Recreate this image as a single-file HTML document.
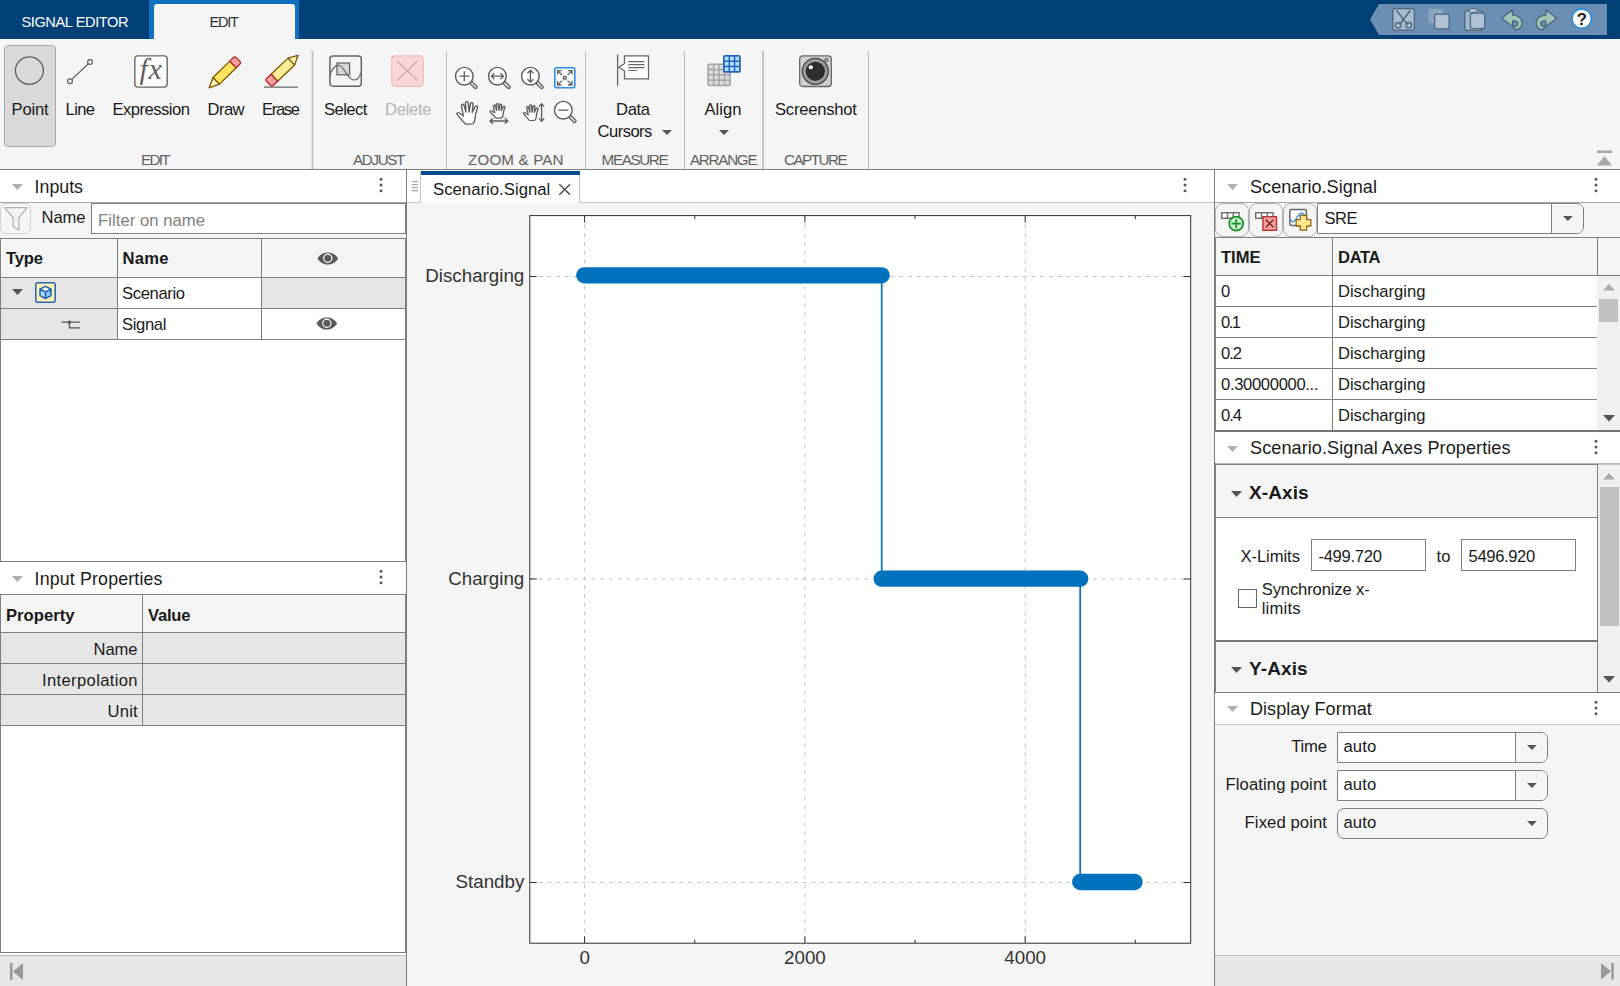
<!DOCTYPE html>
<html lang="en"><head><meta charset="utf-8"><title>Signal Editor</title>
<style>
html,body{margin:0;padding:0;}
body{width:1620px;height:986px;position:relative;overflow:hidden;background:#f5f5f5;font-family:"Liberation Sans",sans-serif;}
.a{position:absolute;box-sizing:border-box;display:block;}
.t{position:absolute;white-space:nowrap;display:block;}
svg{overflow:visible;}
</style></head><body>
<div class="a " style="left:0px;top:0px;width:1620px;height:39px;background:#004076;"></div>
<div class="a " style="left:149px;top:0px;width:150px;height:39px;background:#1171be;"></div>
<div class="a " style="left:154px;top:4px;width:141px;height:35px;background:#f5f5f5;border-radius:3px 3px 0 0;"></div>
<span class="t" style="top:12px;font-size:14.6px;line-height:20px;color:#ffffff;left:21.40px;letter-spacing:-0.397px;">SIGNAL EDITOR</span>
<span class="t" style="top:12px;font-size:14.6px;line-height:20px;color:#333333;left:209.40px;letter-spacing:-1.219px;">EDIT</span>
<svg class="a" style="left:1370px;top:4px;" width="237" height="31" viewBox="0 0 237 31"><path d="M0 15.5 L9 0 H237 V31 H9 Z" fill="#6a8fb2"/></svg>
<div class="a " style="left:0px;top:39px;width:1620px;height:130px;background:#f5f5f5;"></div>
<div class="a " style="left:0px;top:169px;width:1620px;height:1px;background:#808080;"></div>
<svg class="a" style="left:0px;top:0px;" width="1" height="1" viewBox="0 0 1 1"><rect x="311.6" y="51" width="1.7" height="118" fill="#bcbcbc"/><rect x="446" y="51" width="1" height="118" fill="#bcbcbc"/><rect x="585" y="51" width="1" height="118" fill="#bcbcbc"/><rect x="684" y="51" width="1" height="118" fill="#bcbcbc"/><rect x="762.3" y="51" width="1.7" height="118" fill="#bcbcbc"/><rect x="868" y="51" width="1" height="118" fill="#bcbcbc"/></svg>
<div class="a " style="left:4px;top:45px;width:52px;height:102px;background:#d9d9d9;border:1px solid #a9a9a9;border-radius:4px;"></div>
<span class="t" style="top:98px;font-size:16.6px;line-height:23px;color:#1a1a1a;left:11.60px;letter-spacing:-0.209px;">Point</span>
<span class="t" style="top:98px;font-size:16.6px;line-height:23px;color:#1a1a1a;left:65.60px;letter-spacing:-0.662px;">Line</span>
<span class="t" style="top:98px;font-size:16.6px;line-height:23px;color:#1a1a1a;left:112.40px;letter-spacing:-0.502px;">Expression</span>
<span class="t" style="top:98px;font-size:16.6px;line-height:23px;color:#1a1a1a;left:207.60px;letter-spacing:-0.579px;">Draw</span>
<span class="t" style="top:98px;font-size:16.6px;line-height:23px;color:#1a1a1a;left:262.00px;letter-spacing:-1.341px;">Erase</span>
<span class="t" style="top:98px;font-size:16.6px;line-height:23px;color:#1a1a1a;left:324.00px;letter-spacing:-0.547px;">Select</span>
<span class="t" style="top:98px;font-size:16.6px;line-height:23px;color:#b4b4b4;left:385.00px;letter-spacing:-0.277px;">Delete</span>
<span class="t" style="top:98px;font-size:16.6px;line-height:23px;color:#1a1a1a;left:616.00px;letter-spacing:-0.355px;">Data</span>
<span class="t" style="top:120px;font-size:16.6px;line-height:23px;color:#1a1a1a;left:597.60px;letter-spacing:-0.551px;">Cursors</span>
<span class="t" style="top:98px;font-size:16.6px;line-height:23px;color:#1a1a1a;left:704.40px;letter-spacing:0.072px;">Align</span>
<span class="t" style="top:98px;font-size:16.6px;line-height:23px;color:#1a1a1a;left:775.00px;letter-spacing:-0.219px;">Screenshot</span>
<span class="t" style="top:149px;font-size:15.2px;line-height:21px;color:#616161;left:141.00px;letter-spacing:-1.674px;">EDIT</span>
<span class="t" style="top:149px;font-size:15.2px;line-height:21px;color:#616161;left:353.00px;letter-spacing:-1.343px;">ADJUST</span>
<span class="t" style="top:149px;font-size:15.2px;line-height:21px;color:#616161;left:468.00px;letter-spacing:0.144px;">ZOOM &amp; PAN</span>
<span class="t" style="top:149px;font-size:15.2px;line-height:21px;color:#616161;left:601.60px;letter-spacing:-1.362px;">MEASURE</span>
<span class="t" style="top:149px;font-size:15.2px;line-height:21px;color:#616161;left:690.00px;letter-spacing:-1.262px;">ARRANGE</span>
<span class="t" style="top:149px;font-size:15.2px;line-height:21px;color:#616161;left:784.00px;letter-spacing:-1.505px;">CAPTURE</span>
<svg class="a" style="left:662px;top:130px;" width="10" height="5" viewBox="0 0 10 5"><path d="M0 0H10L5 5Z" fill="#555"/></svg>
<svg class="a" style="left:719.4px;top:130px;" width="10" height="5" viewBox="0 0 10 5"><path d="M0 0H10L5 5Z" fill="#555"/></svg>
<svg class="a" style="left:1597px;top:150px;" width="15" height="16" viewBox="0 0 15 16"><rect x="0" y="0.5" width="15" height="2.5" fill="#a6a6a6"/><path d="M0 15.5H15L7.5 6Z" fill="#a6a6a6"/></svg>
<div class="a " style="left:0px;top:170px;width:406px;height:32px;background:#ffffff;"></div>
<div class="a " style="left:0px;top:202px;width:406px;height:1.4px;background:#a8a8a8;"></div>
<svg class="a" style="left:12px;top:184.4px;" width="11" height="6" viewBox="0 0 11 6"><path d="M0 0H11L5.5 6Z" fill="#b0b0b0"/></svg>
<span class="t" style="top:175px;font-size:17.8px;line-height:25px;color:#1a1a1a;left:34.60px;letter-spacing:-0.018px;">Inputs</span>
<svg class="a" style="left:379.4px;top:177.4px;" width="4" height="16" viewBox="0 0 4 16"><circle cx="2" cy="2.3" r="1.5" fill="#5c5c5c"/><circle cx="2" cy="8" r="1.5" fill="#5c5c5c"/><circle cx="2" cy="13.7" r="1.5" fill="#5c5c5c"/></svg>
<div class="a " style="left:406px;top:170px;width:1px;height:816px;background:#7d7d7d;"></div>
<div class="a " style="left:0px;top:203px;width:406px;height:32px;background:#f5f5f5;"></div>
<div class="a " style="left:0px;top:235px;width:406px;height:3px;background:#f5f5f5;"></div>
<div class="a " style="left:0px;top:203px;width:31px;height:31px;background:#f5f5f5;border:1px solid #d2d2d2;border-radius:6px;"></div>
<svg class="a" style="left:4px;top:207px;" width="24" height="24" viewBox="0 0 24 24"><path d="M0.7 0.7H23L14.8 11V23L9.2 19.6V11Z" fill="none" stroke="#b4b4b4" stroke-width="1.3" stroke-linejoin="round"/></svg>
<span class="t" style="top:206px;font-size:16.6px;line-height:23px;color:#1a1a1a;left:41.60px;letter-spacing:-0.160px;">Name</span>
<div class="a " style="left:91px;top:203px;width:315px;height:31px;background:#ffffff;border:1px solid #7f7f7f;"></div>
<span class="t" style="top:209px;font-size:16.6px;line-height:23px;color:#808080;left:98.00px;letter-spacing:0.069px;">Filter on name</span>
<div class="a " style="left:0px;top:238px;width:406px;height:324px;background:#ffffff;border:1px solid #7f7f7f;"></div>
<div class="a " style="left:1px;top:239px;width:404px;height:38px;background:#f5f5f5;"></div>
<div class="a " style="left:1px;top:277px;width:404px;height:1px;background:#7f7f7f;"></div>
<div class="a " style="left:1px;top:308px;width:404px;height:1px;background:#7f7f7f;"></div>
<div class="a " style="left:1px;top:339px;width:404px;height:1px;background:#7f7f7f;"></div>
<div class="a " style="left:1px;top:278px;width:116px;height:30px;background:#e6e6e6;"></div>
<div class="a " style="left:262px;top:278px;width:143px;height:30px;background:#e6e6e6;"></div>
<div class="a " style="left:1px;top:309px;width:116px;height:30px;background:#e6e6e6;"></div>
<div class="a " style="left:117px;top:239px;width:1px;height:101px;background:#7f7f7f;"></div>
<div class="a " style="left:261px;top:239px;width:1px;height:101px;background:#7f7f7f;"></div>
<span class="t" style="top:247px;font-size:16.6px;line-height:23px;color:#1a1a1a;left:6.00px;letter-spacing:-0.171px;font-weight:bold;">Type</span>
<span class="t" style="top:247px;font-size:16.6px;line-height:23px;color:#1a1a1a;left:122.40px;letter-spacing:0.329px;font-weight:bold;">Name</span>
<span class="t" style="top:282px;font-size:16.6px;line-height:23px;color:#1a1a1a;left:122.00px;letter-spacing:-0.360px;">Scenario</span>
<span class="t" style="top:313px;font-size:16.6px;line-height:23px;color:#1a1a1a;left:122.00px;letter-spacing:-0.349px;">Signal</span>
<svg class="a" style="left:316.6px;top:251.8px;" width="22" height="13" viewBox="0 0 22 13"><path d="M0.5 6.5C3 2.2 6.8 0.5 10.8 0.5C14.8 0.5 18.6 2.2 21.1 6.5C18.6 10.8 14.8 12.5 10.8 12.5C6.8 12.5 3 10.8 0.5 6.5Z" fill="#595959"/><circle cx="10.8" cy="6.3" r="4.7" fill="#fff"/><circle cx="10.8" cy="6.3" r="3.5" fill="#595959"/></svg>
<svg class="a" style="left:316.3px;top:316.9px;" width="22" height="13" viewBox="0 0 22 13"><path d="M0.5 6.5C3 2.2 6.8 0.5 10.8 0.5C14.8 0.5 18.6 2.2 21.1 6.5C18.6 10.8 14.8 12.5 10.8 12.5C6.8 12.5 3 10.8 0.5 6.5Z" fill="#595959"/><circle cx="10.8" cy="6.3" r="4.7" fill="#fff"/><circle cx="10.8" cy="6.3" r="3.5" fill="#595959"/></svg>
<svg class="a" style="left:12.4px;top:289.4px;" width="11" height="6" viewBox="0 0 11 6"><path d="M0 0H11L5.5 6Z" fill="#555"/></svg>
<svg class="a" style="left:35px;top:282.4px;" width="21" height="21" viewBox="0 0 21 21"><rect x="0.75" y="0.75" width="19.5" height="19.5" rx="2.2" fill="#fdf1b4" stroke="#2566b8" stroke-width="1.5"/><path d="M10.5 4.3L16 7.1L10.5 10L5 7.1Z" fill="#fff"/><path d="M5 7.1L10.5 10V16.6L5 13.6Z" fill="#a9d9ff"/><path d="M16 7.1L10.5 10V16.6L16 13.6Z" fill="#8ccbff"/><path d="M10.5 4.3L16 7.1V13.6L10.5 16.6L5 13.6V7.1ZM5 7.1L10.5 10L16 7.1M10.5 10V16.6" fill="none" stroke="#1d5fb8" stroke-width="1.5" stroke-linejoin="round"/></svg>
<svg class="a" style="left:61px;top:319px;" width="20" height="11" viewBox="0 0 20 11"><path d="M0.5 3.2H19M8.4 3.2V8.8H19" fill="none" stroke="#555" stroke-width="1.3"/><circle cx="8.4" cy="3.2" r="1.7" fill="#555"/></svg>
<div class="a " style="left:0px;top:562px;width:406px;height:32px;background:#ffffff;"></div>
<svg class="a" style="left:12px;top:576.4px;" width="11" height="6" viewBox="0 0 11 6"><path d="M0 0H11L5.5 6Z" fill="#b0b0b0"/></svg>
<span class="t" style="top:567px;font-size:17.8px;line-height:25px;color:#1a1a1a;left:34.60px;letter-spacing:0.156px;">Input Properties</span>
<svg class="a" style="left:379.4px;top:569.4px;" width="4" height="16" viewBox="0 0 4 16"><circle cx="2" cy="2.3" r="1.5" fill="#5c5c5c"/><circle cx="2" cy="8" r="1.5" fill="#5c5c5c"/><circle cx="2" cy="13.7" r="1.5" fill="#5c5c5c"/></svg>
<div class="a " style="left:0px;top:594px;width:406px;height:359px;background:#ffffff;border:1px solid #7f7f7f;"></div>
<div class="a " style="left:1px;top:595px;width:404px;height:37px;background:#f5f5f5;"></div>
<div class="a " style="left:1px;top:633px;width:404px;height:92px;background:#e6e6e6;"></div>
<div class="a " style="left:1px;top:632px;width:404px;height:1px;background:#7f7f7f;"></div>
<div class="a " style="left:1px;top:663px;width:404px;height:1px;background:#7f7f7f;"></div>
<div class="a " style="left:1px;top:694px;width:404px;height:1px;background:#7f7f7f;"></div>
<div class="a " style="left:1px;top:725px;width:404px;height:1px;background:#7f7f7f;"></div>
<div class="a " style="left:142px;top:595px;width:1px;height:131px;background:#7f7f7f;"></div>
<span class="t" style="top:604px;font-size:16.6px;line-height:23px;color:#1a1a1a;left:6.00px;letter-spacing:0.048px;font-weight:bold;">Property</span>
<span class="t" style="top:604px;font-size:16.6px;line-height:23px;color:#1a1a1a;left:148.00px;letter-spacing:-0.243px;font-weight:bold;">Value</span>
<span class="t" style="top:638px;font-size:16.6px;line-height:23px;color:#1a1a1a;left:93.60px;letter-spacing:-0.094px;">Name</span>
<span class="t" style="top:669px;font-size:16.6px;line-height:23px;color:#1a1a1a;left:42.00px;letter-spacing:0.353px;">Interpolation</span>
<span class="t" style="top:700px;font-size:16.6px;line-height:23px;color:#1a1a1a;left:107.60px;letter-spacing:0.160px;">Unit</span>
<div class="a " style="left:0px;top:953px;width:406px;height:2px;background:#ffffff;"></div>
<div class="a " style="left:0px;top:955px;width:406px;height:1px;background:#c0c0c0;"></div>
<div class="a " style="left:0px;top:956px;width:406px;height:30px;background:#e6e6e6;"></div>
<svg class="a" style="left:10px;top:963px;" width="13" height="17" viewBox="0 0 13 17"><rect x="0" y="0" width="2.5" height="17" fill="#999"/><path d="M13 0V17L3 8.5Z" fill="#999"/></svg>
<div class="a " style="left:407px;top:170px;width:807px;height:32px;background:#ffffff;"></div>
<div class="a " style="left:407px;top:202px;width:807px;height:1px;background:#c8c8c8;"></div>
<svg class="a" style="left:412px;top:181px;" width="6" height="10" viewBox="0 0 6 10"><path d="M0 0.5H6M0 3.5H6M0 6.5H6M0 9.5H6" stroke="#a4a4a4" stroke-width="1.25"/></svg>
<div class="a " style="left:420px;top:171px;width:160px;height:32px;background:#ffffff;border-left:1px solid #c8c8c8;border-right:1px solid #c8c8c8;"></div>
<div class="a " style="left:421px;top:171px;width:158.5px;height:4px;background:#004b8d;"></div>
<span class="t" style="top:178px;font-size:16.76px;line-height:23px;color:#1a1a1a;left:433.00px;">Scenario.Signal</span>
<svg class="a" style="left:559px;top:183.6px;" width="11.4" height="11" viewBox="0 0 11.4 11"><path d="M0.3 0.3L11.1 10.7M11.1 0.3L0.3 10.7" stroke="#444" stroke-width="1.3"/></svg>
<svg class="a" style="left:1183.4px;top:177.4px;" width="4" height="16" viewBox="0 0 4 16"><circle cx="2" cy="2.3" r="1.5" fill="#5c5c5c"/><circle cx="2" cy="8" r="1.5" fill="#5c5c5c"/><circle cx="2" cy="13.7" r="1.5" fill="#5c5c5c"/></svg>
<div class="a " style="left:407px;top:203px;width:807px;height:783px;background:#f5f5f5;"></div>
<svg class="a" style="left:0px;top:0px;" width="1620" height="986" viewBox="0 0 1620 986"><rect x="529.8" y="215.6" width="660.9000000000001" height="727.6" fill="#fff"/><line x1="584.6" y1="215.6" x2="584.6" y2="943.2" stroke="#c2c2c2" stroke-width="1" stroke-dasharray="3.8 5"/><line x1="804.9" y1="215.6" x2="804.9" y2="943.2" stroke="#c2c2c2" stroke-width="1" stroke-dasharray="3.8 5"/><line x1="1025.2" y1="215.6" x2="1025.2" y2="943.2" stroke="#c2c2c2" stroke-width="1" stroke-dasharray="3.8 5"/><line x1="529.8" y1="276.5" x2="1190.7" y2="276.5" stroke="#c2c2c2" stroke-width="1" stroke-dasharray="3.8 5"/><line x1="529.8" y1="579" x2="1190.7" y2="579" stroke="#c2c2c2" stroke-width="1" stroke-dasharray="3.8 5"/><line x1="529.8" y1="882.5" x2="1190.7" y2="882.5" stroke="#c2c2c2" stroke-width="1" stroke-dasharray="3.8 5"/><polyline fill="none" stroke="#0072bd" stroke-width="1.7" points="584.3,276.5 881.7,276.5 881.7,579 1080.2,579 1080.2,882.5 1134.5,882.5"/><line x1="584.3" y1="275.3" x2="881.7" y2="275.3" stroke="#0072bd" stroke-width="16.3" stroke-linecap="round"/><line x1="881.7" y1="578.7" x2="1080.2" y2="578.7" stroke="#0072bd" stroke-width="16.3" stroke-linecap="round"/><line x1="1080.2" y1="882.0" x2="1134.5" y2="882.0" stroke="#0072bd" stroke-width="16.3" stroke-linecap="round"/><rect x="529.8" y="215.6" width="660.9000000000001" height="727.6" fill="none" stroke="#303030" stroke-width="1"/><path d="M584.6 215.6v7M584.6 943.2v-7" stroke="#303030" stroke-width="1"/><path d="M804.9 215.6v7M804.9 943.2v-7" stroke="#303030" stroke-width="1"/><path d="M1025.2 215.6v7M1025.2 943.2v-7" stroke="#303030" stroke-width="1"/><path d="M694.8 215.6v3.5M694.8 943.2v-3.5" stroke="#303030" stroke-width="1"/><path d="M915.0 215.6v3.5M915.0 943.2v-3.5" stroke="#303030" stroke-width="1"/><path d="M1135.3 215.6v3.5M1135.3 943.2v-3.5" stroke="#303030" stroke-width="1"/><path d="M529.8 276.5h7M1190.7 276.5h-7" stroke="#303030" stroke-width="1"/><path d="M529.8 579h7M1190.7 579h-7" stroke="#303030" stroke-width="1"/><path d="M529.8 882.5h7M1190.7 882.5h-7" stroke="#303030" stroke-width="1"/><text x="524.3" y="282.0" text-anchor="end" font-family="Liberation Sans, sans-serif" font-size="18.75" fill="#333333">Discharging</text><text x="524.3" y="585.0" text-anchor="end" font-family="Liberation Sans, sans-serif" font-size="18.75" fill="#333333">Charging</text><text x="524.3" y="888.0" text-anchor="end" font-family="Liberation Sans, sans-serif" font-size="18.75" fill="#333333">Standby</text><text x="584.6" y="964" text-anchor="middle" font-family="Liberation Sans, sans-serif" font-size="18.75" fill="#333333">0</text><text x="804.9" y="964" text-anchor="middle" font-family="Liberation Sans, sans-serif" font-size="18.75" fill="#333333">2000</text><text x="1025.2" y="964" text-anchor="middle" font-family="Liberation Sans, sans-serif" font-size="18.75" fill="#333333">4000</text></svg>
<div class="a " style="left:1214px;top:170px;width:1px;height:816px;background:#7d7d7d;"></div>
<div class="a " style="left:1215px;top:170px;width:405px;height:32px;background:#ffffff;"></div>
<div class="a " style="left:1215px;top:202px;width:405px;height:1.4px;background:#a8a8a8;"></div>
<svg class="a" style="left:1227.4px;top:184.4px;" width="11" height="6" viewBox="0 0 11 6"><path d="M0 0H11L5.5 6Z" fill="#b0b0b0"/></svg>
<span class="t" style="top:175px;font-size:18.1px;line-height:25px;color:#1a1a1a;left:1250.00px;letter-spacing:0.016px;">Scenario.Signal</span>
<svg class="a" style="left:1594.2px;top:177.4px;" width="4" height="16" viewBox="0 0 4 16"><circle cx="2" cy="2.3" r="1.5" fill="#5c5c5c"/><circle cx="2" cy="8" r="1.5" fill="#5c5c5c"/><circle cx="2" cy="13.7" r="1.5" fill="#5c5c5c"/></svg>
<div class="a " style="left:1215px;top:203px;width:405px;height:34px;background:#f5f5f5;"></div>
<div class="a " style="left:1215px;top:203px;width:34px;height:34px;background:#f5f5f5;border:1px solid #b4b4b4;border-radius:8px;"></div>
<div class="a " style="left:1249px;top:203px;width:34px;height:34px;background:#f5f5f5;border:1px solid #b4b4b4;border-radius:8px;"></div>
<div class="a " style="left:1283px;top:203px;width:34px;height:34px;background:#f5f5f5;border:1px solid #b4b4b4;border-radius:8px;"></div>
<svg class="a" style="left:1221px;top:212px;" width="26" height="20" viewBox="0 0 26 20"><rect x="0.7" y="0.7" width="17.4" height="5.6" fill="#fff" stroke="#6e6e6e" stroke-width="1.4"/><path d="M6.5 0.7V6.3M12.3 0.7V6.3" stroke="#6e6e6e" stroke-width="1.4"/><circle cx="15.2" cy="11.6" r="7" fill="#cdf2cd" stroke="#15912a" stroke-width="1.7"/><path d="M15.2 7V16.2M10.6 11.6H19.8" stroke="#15912a" stroke-width="1.7"/></svg>
<svg class="a" style="left:1255px;top:212px;" width="26" height="20" viewBox="0 0 26 20"><rect x="0.7" y="0.7" width="17.4" height="5.6" fill="#fff" stroke="#6e6e6e" stroke-width="1.4"/><path d="M6.5 0.7V6.3M12.3 0.7V6.3" stroke="#6e6e6e" stroke-width="1.4"/><rect x="7.9" y="4.7" width="13.6" height="13.6" fill="#f99f9f" stroke="#b03434" stroke-width="1.4"/><path d="M10.9 7.7L18.5 15.3M18.5 7.7L10.9 15.3" stroke="#6e1c1c" stroke-width="1.3"/></svg>
<svg class="a" style="left:1289px;top:209px;" width="24" height="24" viewBox="0 0 24 24"><rect x="0.8" y="0.6" width="16.6" height="16" rx="2" fill="#fff" stroke="#666" stroke-width="1.5"/><path d="M1.2 10.1C2 12 3.2 13 4.4 12.6C7.5 11.5 8.8 4.5 12.6 4.2C14.8 4.2 16 6 16.8 8.5" fill="none" stroke="#3d94e6" stroke-width="1.4"/><path d="M11.3 6.4H17.7V10.6H21.9V17H17.7V21.2H11.3V17H7.1V10.6H11.3Z" fill="#ffe68c" stroke="#8a6a12" stroke-width="1.3" stroke-linejoin="round"/></svg>
<div class="a " style="left:1316.5px;top:203px;width:267.5px;height:31px;background:#ffffff;border:1px solid #7f7f7f;border-radius:0 7px 7px 0;"></div>
<div class="a " style="left:1551px;top:204px;width:32.0px;height:29px;background:#f5f5f5;border-left:1px solid #7f7f7f;border-radius:0 6px 6px 0;"></div>
<svg class="a" style="left:1562.6px;top:216.2px;" width="9.8" height="5" viewBox="0 0 9.8 5"><path d="M0 0H9.8L4.9 5Z" fill="#555"/></svg>
<span class="t" style="top:207px;font-size:16.5px;line-height:23px;color:#1a1a1a;left:1324.40px;letter-spacing:-0.363px;">SRE</span>
<div class="a " style="left:1215px;top:237px;width:405px;height:1px;background:#7f7f7f;"></div>
<div class="a " style="left:1215px;top:238px;width:405px;height:37px;background:#f5f5f5;"></div>
<div class="a " style="left:1216px;top:276px;width:381px;height:154px;background:#ffffff;"></div>
<div class="a " style="left:1215px;top:275px;width:405px;height:1px;background:#7f7f7f;"></div>
<div class="a " style="left:1215px;top:306px;width:382px;height:1px;background:#7f7f7f;"></div>
<div class="a " style="left:1215px;top:337px;width:382px;height:1px;background:#7f7f7f;"></div>
<div class="a " style="left:1215px;top:368px;width:382px;height:1px;background:#7f7f7f;"></div>
<div class="a " style="left:1215px;top:399px;width:382px;height:1px;background:#7f7f7f;"></div>
<div class="a " style="left:1215px;top:430px;width:405px;height:2px;background:#757575;"></div>
<div class="a " style="left:1215px;top:237px;width:1px;height:228px;background:#7f7f7f;"></div>
<div class="a " style="left:1332px;top:238px;width:1px;height:192px;background:#7f7f7f;"></div>
<div class="a " style="left:1597px;top:238px;width:1px;height:38px;background:#7f7f7f;"></div>
<div class="a " style="left:1597px;top:276px;width:23px;height:154px;background:#f0f0f0;"></div>
<span class="t" style="top:246px;font-size:16.6px;line-height:23px;color:#1a1a1a;left:1221.00px;letter-spacing:-0.017px;font-weight:bold;">TIME</span>
<span class="t" style="top:246px;font-size:16.6px;line-height:23px;color:#1a1a1a;left:1338.00px;letter-spacing:-0.347px;font-weight:bold;">DATA</span>
<span class="t" style="top:280px;font-size:16.6px;line-height:23px;color:#1a1a1a;left:1221.00px;">0</span>
<span class="t" style="top:280px;font-size:16.6px;line-height:23px;color:#1a1a1a;left:1338.00px;letter-spacing:-0.025px;">Discharging</span>
<span class="t" style="top:311px;font-size:16.6px;line-height:23px;color:#1a1a1a;left:1221.00px;letter-spacing:-1.538px;">0.1</span>
<span class="t" style="top:311px;font-size:16.6px;line-height:23px;color:#1a1a1a;left:1338.00px;letter-spacing:-0.025px;">Discharging</span>
<span class="t" style="top:342px;font-size:16.6px;line-height:23px;color:#1a1a1a;left:1221.00px;letter-spacing:-1.038px;">0.2</span>
<span class="t" style="top:342px;font-size:16.6px;line-height:23px;color:#1a1a1a;left:1338.00px;letter-spacing:-0.025px;">Discharging</span>
<span class="t" style="top:373px;font-size:16.6px;line-height:23px;color:#1a1a1a;left:1221.00px;letter-spacing:-0.336px;">0.30000000...</span>
<span class="t" style="top:373px;font-size:16.6px;line-height:23px;color:#1a1a1a;left:1338.00px;letter-spacing:-0.025px;">Discharging</span>
<span class="t" style="top:404px;font-size:16.6px;line-height:23px;color:#1a1a1a;left:1221.00px;letter-spacing:-1.038px;">0.4</span>
<span class="t" style="top:404px;font-size:16.6px;line-height:23px;color:#1a1a1a;left:1338.00px;letter-spacing:-0.025px;">Discharging</span>
<svg class="a" style="left:1602.5px;top:284.35px;" width="12" height="6.5" viewBox="0 0 12 6.5"><path d="M0 6.5H12L6.0 0Z" fill="#ababab"/></svg>
<div class="a " style="left:1599px;top:299px;width:19px;height:22.6px;background:#c1c1c1;"></div>
<svg class="a" style="left:1602.5px;top:414.75px;" width="12" height="6.5" viewBox="0 0 12 6.5"><path d="M0 0H12L6.0 6.5Z" fill="#505050"/></svg>
<div class="a " style="left:1215px;top:432px;width:405px;height:31px;background:#ffffff;"></div>
<svg class="a" style="left:1227.4px;top:445.6px;" width="11" height="6" viewBox="0 0 11 6"><path d="M0 0H11L5.5 6Z" fill="#b0b0b0"/></svg>
<span class="t" style="top:436px;font-size:18.1px;line-height:25px;color:#1a1a1a;left:1250.00px;letter-spacing:0.068px;">Scenario.Signal Axes Properties</span>
<svg class="a" style="left:1594.2px;top:439.4px;" width="4" height="16" viewBox="0 0 4 16"><circle cx="2" cy="2.3" r="1.5" fill="#5c5c5c"/><circle cx="2" cy="8" r="1.5" fill="#5c5c5c"/><circle cx="2" cy="13.7" r="1.5" fill="#5c5c5c"/></svg>
<div class="a " style="left:1215px;top:463px;width:405px;height:1px;background:#b8b8b8;"></div>
<div class="a " style="left:1215px;top:464px;width:383px;height:1px;background:#7f7f7f;"></div>
<div class="a " style="left:1598px;top:464px;width:22px;height:1px;background:#c4c4c4;"></div>
<div class="a " style="left:1215px;top:463px;width:1px;height:230px;background:#7f7f7f;"></div>
<div class="a " style="left:1216px;top:465px;width:381px;height:52px;background:#f5f5f5;"></div>
<div class="a " style="left:1216px;top:517px;width:381px;height:1px;background:#7f7f7f;"></div>
<div class="a " style="left:1216px;top:518px;width:381px;height:122px;background:#ffffff;"></div>
<div class="a " style="left:1216px;top:640px;width:381px;height:2px;background:#757575;"></div>
<div class="a " style="left:1216px;top:642px;width:381px;height:50px;background:#f5f5f5;"></div>
<div class="a " style="left:1597px;top:465px;width:1px;height:227px;background:#7f7f7f;"></div>
<div class="a " style="left:1598px;top:465px;width:22px;height:227px;background:#f0f0f0;"></div>
<svg class="a" style="left:1230.6px;top:491px;" width="11" height="6" viewBox="0 0 11 6"><path d="M0 0H11L5.5 6Z" fill="#555"/></svg>
<span class="t" style="top:479px;font-size:19px;line-height:27px;color:#1a1a1a;left:1249.00px;letter-spacing:0.093px;font-weight:bold;">X-Axis</span>
<svg class="a" style="left:1230.6px;top:667px;" width="11" height="6" viewBox="0 0 11 6"><path d="M0 0H11L5.5 6Z" fill="#555"/></svg>
<span class="t" style="top:655px;font-size:19px;line-height:27px;color:#1a1a1a;left:1249.00px;letter-spacing:0.103px;font-weight:bold;">Y-Axis</span>
<span class="t" style="top:545px;font-size:16.6px;line-height:23px;color:#1a1a1a;left:1240.40px;letter-spacing:-0.050px;">X-Limits</span>
<div class="a " style="left:1311px;top:539px;width:115px;height:32px;background:#ffffff;border:1px solid #7f7f7f;"></div>
<span class="t" style="top:545px;font-size:16.6px;line-height:23px;color:#1a1a1a;left:1318.40px;letter-spacing:-0.276px;">-499.720</span>
<span class="t" style="top:545px;font-size:16.6px;line-height:23px;color:#1a1a1a;left:1436.60px;letter-spacing:0.156px;">to</span>
<div class="a " style="left:1461px;top:539px;width:115px;height:32px;background:#ffffff;border:1px solid #7f7f7f;"></div>
<span class="t" style="top:545px;font-size:16.6px;line-height:23px;color:#1a1a1a;left:1468.60px;letter-spacing:-0.377px;">5496.920</span>
<div class="a " style="left:1237.5px;top:589px;width:19.5px;height:19px;background:#ffffff;border:1px solid #666;"></div>
<span class="t" style="top:578px;font-size:16.6px;line-height:23px;color:#1a1a1a;left:1261.70px;letter-spacing:-0.130px;">Synchronize x-</span>
<span class="t" style="top:597px;font-size:16.6px;line-height:23px;color:#1a1a1a;left:1261.70px;letter-spacing:0.219px;">limits</span>
<svg class="a" style="left:1603.0px;top:473.05px;" width="12" height="6.5" viewBox="0 0 12 6.5"><path d="M0 6.5H12L6.0 0Z" fill="#ababab"/></svg>
<div class="a " style="left:1600px;top:487px;width:19px;height:139px;background:#c1c1c1;"></div>
<svg class="a" style="left:1603.0px;top:675.95px;" width="12" height="6.5" viewBox="0 0 12 6.5"><path d="M0 0H12L6.0 6.5Z" fill="#555"/></svg>
<div class="a " style="left:1215px;top:692px;width:405px;height:1px;background:#7f7f7f;"></div>
<div class="a " style="left:1215px;top:693px;width:405px;height:31px;background:#ffffff;"></div>
<div class="a " style="left:1215px;top:724px;width:405px;height:1px;background:#c8c8c8;"></div>
<svg class="a" style="left:1227.4px;top:706px;" width="11" height="6" viewBox="0 0 11 6"><path d="M0 0H11L5.5 6Z" fill="#b0b0b0"/></svg>
<span class="t" style="top:697px;font-size:18.1px;line-height:25px;color:#1a1a1a;left:1250.00px;letter-spacing:0.016px;">Display Format</span>
<svg class="a" style="left:1594.2px;top:700.2px;" width="4" height="16" viewBox="0 0 4 16"><circle cx="2" cy="2.3" r="1.5" fill="#5c5c5c"/><circle cx="2" cy="8" r="1.5" fill="#5c5c5c"/><circle cx="2" cy="13.7" r="1.5" fill="#5c5c5c"/></svg>
<div class="a " style="left:1215px;top:725px;width:405px;height:230px;background:#f5f5f5;"></div>
<span class="t" style="top:735px;font-size:16.7px;line-height:23px;color:#1a1a1a;left:1291.30px;letter-spacing:-0.264px;">Time</span>
<div class="a " style="left:1336.5px;top:732px;width:211.4px;height:31px;background:#ffffff;border:1px solid #7f7f7f;border-radius:0 7px 7px 0;"></div>
<div class="a " style="left:1515px;top:733px;width:31.90000000000009px;height:29px;background:#f5f5f5;border-left:1px solid #7f7f7f;border-radius:0 6px 6px 0;"></div>
<svg class="a" style="left:1526.55px;top:745.2px;" width="9.8" height="5" viewBox="0 0 9.8 5"><path d="M0 0H9.8L4.9 5Z" fill="#555"/></svg>
<span class="t" style="top:735px;font-size:16.7px;line-height:23px;color:#1a1a1a;left:1343.40px;letter-spacing:0.132px;">auto</span>
<span class="t" style="top:773px;font-size:16.7px;line-height:23px;color:#1a1a1a;left:1225.40px;letter-spacing:0.103px;">Floating point</span>
<div class="a " style="left:1336.5px;top:770px;width:211.4px;height:31px;background:#ffffff;border:1px solid #7f7f7f;border-radius:0 7px 7px 0;"></div>
<div class="a " style="left:1515px;top:771px;width:31.90000000000009px;height:29px;background:#f5f5f5;border-left:1px solid #7f7f7f;border-radius:0 6px 6px 0;"></div>
<svg class="a" style="left:1526.55px;top:783.2px;" width="9.8" height="5" viewBox="0 0 9.8 5"><path d="M0 0H9.8L4.9 5Z" fill="#555"/></svg>
<span class="t" style="top:773px;font-size:16.7px;line-height:23px;color:#1a1a1a;left:1343.40px;letter-spacing:0.132px;">auto</span>
<span class="t" style="top:811px;font-size:16.7px;line-height:23px;color:#1a1a1a;left:1244.60px;letter-spacing:0.071px;">Fixed point</span>
<div class="a " style="left:1336.5px;top:808px;width:211.4px;height:31px;background:#f5f5f5;border:1px solid #7f7f7f;border-radius:7px;"></div>
<svg class="a" style="left:1526.55px;top:821.2px;" width="9.8" height="5" viewBox="0 0 9.8 5"><path d="M0 0H9.8L4.9 5Z" fill="#555"/></svg>
<span class="t" style="top:811px;font-size:16.7px;line-height:23px;color:#1a1a1a;left:1343.40px;letter-spacing:0.132px;">auto</span>
<div class="a " style="left:1215px;top:955px;width:405px;height:1px;background:#c0c0c0;"></div>
<div class="a " style="left:1215px;top:956px;width:405px;height:30px;background:#e6e6e6;"></div>
<svg class="a" style="left:1601.4px;top:963.3px;" width="13" height="17" viewBox="0 0 13 17"><rect x="10.3" y="0" width="2.5" height="16.5" fill="#999"/><path d="M0 0V16.5L10 8.25Z" fill="#999"/></svg>
<svg class="a" style="left:14px;top:56px;" width="31" height="30" viewBox="0 0 31 30"><ellipse cx="15.4" cy="14.6" rx="14.0" ry="13.7" fill="none" stroke="#5e5e5e" stroke-width="1.3"/></svg>
<svg class="a" style="left:66px;top:58px;" width="28" height="28" viewBox="0 0 28 28"><path d="M5.8 21.4L22.2 5.9" stroke="#5e5e5e" stroke-width="1.3"/><circle cx="4" cy="23.3" r="2.4" fill="#fff" stroke="#5e5e5e" stroke-width="1.2"/><circle cx="24" cy="4" r="2.4" fill="#fff" stroke="#5e5e5e" stroke-width="1.2"/></svg>
<svg class="a" style="left:134px;top:55px;" width="34" height="33" viewBox="0 0 34 33"><rect x="0.8" y="0.9" width="32.4" height="31.2" rx="3" fill="#fff" stroke="#666" stroke-width="1.4"/><text x="17.0" y="24.0" text-anchor="middle" font-family="Liberation Serif, serif" font-style="italic" font-size="30" letter-spacing="0.6" fill="#606060">fx</text></svg>
<svg class="a" style="left:0px;top:0px;" width="1" height="1" viewBox="0 0 1 1"><g transform="translate(209.2 87.8) rotate(-44.5)" stroke-linejoin="round" stroke-width="1.35"><path d="M0 0L9.9 -4.6V4.6Z" fill="#fdf2b8" stroke="#7a5a00"/><path d="M9.9 -4.6H33.4V4.6H9.9Z" fill="#fde45c" stroke="#7a5a00"/><path d="M33.4 -4.6H38.4Q40.4 -4.6 40.4 -2.5999999999999996V2.5999999999999996Q40.4 4.6 38.4 4.6H33.4Z" fill="#fb9fa0" stroke="#b52a2a"/></g></svg>
<svg class="a" style="left:0px;top:0px;" width="1" height="1" viewBox="0 0 1 1"><g transform="translate(298 55.3) rotate(136.5)" stroke-linejoin="round" stroke-width="1.35"><path d="M0 0L9.2 -4.8V4.8Z" fill="#fdf2b8" stroke="#7a5a00"/><path d="M9.2 -4.8H32.6V4.8H9.2Z" fill="#fdec95" stroke="#7a5a00"/><path d="M32.6 -4.8H38.6Q40.6 -4.8 40.6 -2.8V2.8Q40.6 4.8 38.6 4.8H32.6Z" fill="#fb9fa0" stroke="#b52a2a"/></g><path d="M264 87.2H298" stroke="#666" stroke-width="1.3"/></svg>
<svg class="a" style="left:329px;top:55px;" width="33" height="32" viewBox="0 0 33 32"><rect x="0.9" y="1" width="31.4" height="30.2" rx="3" fill="none" stroke="#666" stroke-width="1.5"/><rect x="8" y="8" width="12.6" height="11.8" fill="#d6d6d6" stroke="#666" stroke-width="1.3"/><path d="M1 21C2.5 13.5 6.5 10 10 10.5C16 11.5 17.5 24.5 25 25C28.5 25 30.5 22 32 18" fill="none" stroke="#666" stroke-width="1.2"/></svg>
<svg class="a" style="left:391px;top:55px;" width="33" height="32" viewBox="0 0 33 32"><rect x="0.8" y="0.9" width="31.4" height="30.4" rx="3.5" fill="#f9d7d7" stroke="#ecbcbc" stroke-width="1.2"/><path d="M6 6L26.5 25.5M26.5 6L6 25.5" stroke="#d2a4a4" stroke-width="1.2"/></svg>
<svg class="a" style="left:0px;top:0px;" width="1" height="1" viewBox="0 0 1 1"><path d="M470.90000000000003 82.4L475.6 87.0" stroke="#5e5e5e" stroke-width="4.2" stroke-linecap="round"/><path d="M471.7 83.2L475.5 86.9" stroke="#cfcfcf" stroke-width="2" stroke-linecap="round"/><circle cx="464.3" cy="76.2" r="8.8" fill="#fff" stroke="#5e5e5e" stroke-width="1.4"/><g transform="translate(464.3 76.2)" fill="none" stroke="#5e5e5e" stroke-width="1.3"><path d="M-5 0H5M0 -5V5"/></g></svg>
<svg class="a" style="left:0px;top:0px;" width="1" height="1" viewBox="0 0 1 1"><path d="M504.0 82.4L508.7 87.0" stroke="#5e5e5e" stroke-width="4.2" stroke-linecap="round"/><path d="M504.79999999999995 83.2L508.59999999999997 86.9" stroke="#cfcfcf" stroke-width="2" stroke-linecap="round"/><circle cx="497.4" cy="76.2" r="8.8" fill="#fff" stroke="#5e5e5e" stroke-width="1.4"/><g transform="translate(497.4 76.2)" fill="none" stroke="#5e5e5e" stroke-width="1.3"><path d="M-6 0H6M-3 -3L-6 0L-3 3M3 -3L6 0L3 3"/></g></svg>
<svg class="a" style="left:0px;top:0px;" width="1" height="1" viewBox="0 0 1 1"><path d="M537.0 82.4L541.6999999999999 87.0" stroke="#5e5e5e" stroke-width="4.2" stroke-linecap="round"/><path d="M537.8 83.2L541.6 86.9" stroke="#cfcfcf" stroke-width="2" stroke-linecap="round"/><circle cx="530.4" cy="76.2" r="8.8" fill="#fff" stroke="#5e5e5e" stroke-width="1.4"/><g transform="translate(530.4 76.2)" fill="none" stroke="#5e5e5e" stroke-width="1.3"><path d="M0 -6V6M-3 -3L0 -6L3 -3M-3 3L0 6L3 3"/></g></svg>
<svg class="a" style="left:0px;top:0px;" width="1" height="1" viewBox="0 0 1 1"><path d="M569.9 116.4L574.5999999999999 121.0" stroke="#5e5e5e" stroke-width="4.2" stroke-linecap="round"/><path d="M570.6999999999999 117.2L574.5 120.9" stroke="#cfcfcf" stroke-width="2" stroke-linecap="round"/><circle cx="563.3" cy="110.2" r="8.8" fill="#fff" stroke="#5e5e5e" stroke-width="1.4"/><g transform="translate(563.3 110.2)" fill="none" stroke="#5e5e5e" stroke-width="1.3"><path d="M-5 0H5"/></g></svg>
<svg class="a" style="left:554px;top:67px;" width="22" height="22" viewBox="0 0 22 22"><rect x="0.8" y="0.8" width="20" height="20" rx="2" fill="#fafcff" stroke="#2d8ceb" stroke-width="1.6"/><g fill="none" stroke="#666" stroke-width="1.3"><path d="M3.6 3.6L8 8M3.6 7.6V3.6H7.6M18 3.6L13.6 8M14 3.6H18V7.6M3.6 18L8 13.6M3.6 14V18H7.6M18 18L13.6 13.6M18 14V18H14"/><rect x="9.5" y="9.5" width="2.6" height="2.6"/></g></svg>
<svg class="a" style="left:455.5px;top:100.8px;" width="23" height="24" viewBox="0 0 23 24"><g transform="scale(1.12 1)"><path d="M8.5 23C6 20.5 3.6 16.6 0.9 13.4C0.2 12.4 1.5 11 2.8 11.9L6.6 15L4.8 4.6C4.6 3.1 6.7 2.7 7.1 4.2L8.9 11.2L8.5 1.9C8.5 0.3 10.8 0.3 10.9 1.9L11.7 11L13 2.7C13.3 1.2 15.4 1.5 15.2 3.1L14.5 11.6L17.2 5.6C17.9 4.3 19.8 5.1 19.3 6.5C17.9 10.6 17.1 14 16.9 18C16.8 20.6 15.6 23 13.2 23Z" fill="#fff" stroke="#5e5e5e" stroke-width="1.25" stroke-linejoin="round"/></g></svg>
<svg class="a" style="left:489px;top:102.5px;" width="20" height="22" viewBox="0 0 20 22"><g transform="translate(0.5 0) scale(0.8 0.66)"><path d="M8.5 23C6 20.5 3.6 16.6 0.9 13.4C0.2 12.4 1.5 11 2.8 11.9L6.6 15L4.8 4.6C4.6 3.1 6.7 2.7 7.1 4.2L8.9 11.2L8.5 1.9C8.5 0.3 10.8 0.3 10.9 1.9L11.7 11L13 2.7C13.3 1.2 15.4 1.5 15.2 3.1L14.5 11.6L17.2 5.6C17.9 4.3 19.8 5.1 19.3 6.5C17.9 10.6 17.1 14 16.9 18C16.8 20.6 15.6 23 13.2 23Z" fill="#fff" stroke="#5e5e5e" stroke-width="1.7" stroke-linejoin="round"/></g><path d="M1 18H18.8M4 15.2L1 18L4 20.8M15.8 15.2L18.8 18L15.8 20.8" fill="none" stroke="#5e5e5e" stroke-width="1.3"/></svg>
<svg class="a" style="left:522.5px;top:102.5px;" width="22" height="20" viewBox="0 0 22 20"><g transform="translate(0 1.4) scale(0.78 0.7)"><path d="M8.5 23C6 20.5 3.6 16.6 0.9 13.4C0.2 12.4 1.5 11 2.8 11.9L6.6 15L4.8 4.6C4.6 3.1 6.7 2.7 7.1 4.2L8.9 11.2L8.5 1.9C8.5 0.3 10.8 0.3 10.9 1.9L11.7 11L13 2.7C13.3 1.2 15.4 1.5 15.2 3.1L14.5 11.6L17.2 5.6C17.9 4.3 19.8 5.1 19.3 6.5C17.9 10.6 17.1 14 16.9 18C16.8 20.6 15.6 23 13.2 23Z" fill="#fff" stroke="#5e5e5e" stroke-width="1.7" stroke-linejoin="round"/></g><path d="M18.6 0.8V18.2M15.9 3.6L18.6 0.8L21.3 3.6M15.9 15.4L18.6 18.2L21.3 15.4" fill="none" stroke="#5e5e5e" stroke-width="1.3"/></svg>
<svg class="a" style="left:616px;top:54px;" width="34" height="33" viewBox="0 0 34 33"><path d="M1.6 0.2V31.8" stroke="#666" stroke-width="1.3"/><path d="M8.5 1.8H32.5V24.8H8.5V17L2.9 13.3L8.5 9.5Z" fill="#fff" stroke="#666" stroke-width="1.3" stroke-linejoin="miter"/><path d="M12.2 7.6H28.4M12.2 10.6H28.4M12.2 13.6H28.4M12.2 16.5H21" stroke="#666" stroke-width="1.1"/></svg>
<svg class="a" style="left:0px;top:0px;" width="1" height="1" viewBox="0 0 1 1"><rect x="707.3" y="63.4" width="23.6" height="22.9" rx="2" fill="#a3a3a3"/><rect x="708.90" y="65.00" width="4.05" height="3.88" fill="#dcdcdc"/><rect x="708.90" y="70.28" width="4.05" height="3.88" fill="#dcdcdc"/><rect x="708.90" y="75.55" width="4.05" height="3.88" fill="#dcdcdc"/><rect x="708.90" y="80.83" width="4.05" height="3.88" fill="#dcdcdc"/><rect x="714.35" y="65.00" width="4.05" height="3.88" fill="#dcdcdc"/><rect x="714.35" y="70.28" width="4.05" height="3.88" fill="#dcdcdc"/><rect x="714.35" y="75.55" width="4.05" height="3.88" fill="#dcdcdc"/><rect x="714.35" y="80.83" width="4.05" height="3.88" fill="#dcdcdc"/><rect x="719.80" y="65.00" width="4.05" height="3.88" fill="#dcdcdc"/><rect x="719.80" y="70.28" width="4.05" height="3.88" fill="#dcdcdc"/><rect x="719.80" y="75.55" width="4.05" height="3.88" fill="#dcdcdc"/><rect x="719.80" y="80.83" width="4.05" height="3.88" fill="#dcdcdc"/><rect x="725.25" y="65.00" width="4.05" height="3.88" fill="#dcdcdc"/><rect x="725.25" y="70.28" width="4.05" height="3.88" fill="#dcdcdc"/><rect x="725.25" y="75.55" width="4.05" height="3.88" fill="#dcdcdc"/><rect x="725.25" y="80.83" width="4.05" height="3.88" fill="#dcdcdc"/><rect x="723" y="54.9" width="17.8" height="17.8" rx="2" fill="#1f63bd"/><rect x="724.70" y="56.60" width="3.80" height="3.80" fill="#b5deff"/><rect x="724.70" y="61.90" width="3.80" height="3.80" fill="#b5deff"/><rect x="724.70" y="67.20" width="3.80" height="3.80" fill="#b5deff"/><rect x="730.00" y="56.60" width="3.80" height="3.80" fill="#b5deff"/><rect x="730.00" y="61.90" width="3.80" height="3.80" fill="#b5deff"/><rect x="730.00" y="67.20" width="3.80" height="3.80" fill="#b5deff"/><rect x="735.30" y="56.60" width="3.80" height="3.80" fill="#b5deff"/><rect x="735.30" y="61.90" width="3.80" height="3.80" fill="#b5deff"/><rect x="735.30" y="67.20" width="3.80" height="3.80" fill="#b5deff"/></svg>
<svg class="a" style="left:799px;top:54.5px;" width="33" height="32" viewBox="0 0 33 32"><rect x="0.7" y="0.9" width="31.6" height="30.6" rx="3" fill="#d0d0d0" stroke="#666" stroke-width="1.3"/><circle cx="16.3" cy="16.3" r="13" fill="#9c9c9c" stroke="#444" stroke-width="1.3"/><circle cx="16.3" cy="16.3" r="9.6" fill="#2e2e2e"/><circle cx="11.8" cy="12.3" r="2.1" fill="#fff"/><circle cx="27.4" cy="5.1" r="1.6" fill="#bbb" stroke="#444" stroke-width="1"/></svg>
<svg class="a" style="left:1392px;top:8px;" width="23" height="23" viewBox="0 0 23 23"><rect x="0.9" y="0.7" width="21.4" height="21.4" rx="2" fill="#a9bdd1" stroke="#4f657b" stroke-width="1.3"/><path d="M4.6 2.2L15.5 16.6M18.4 2.2L7.5 16.6" stroke="#4f657b" stroke-width="1.5"/><circle cx="6.2" cy="17.3" r="2.8" fill="none" stroke="#4f657b" stroke-width="1.3"/><circle cx="16.8" cy="17.3" r="2.8" fill="none" stroke="#4f657b" stroke-width="1.3"/></svg>
<svg class="a" style="left:1428px;top:8px;" width="22" height="22" viewBox="0 0 22 22"><rect x="0.7" y="0.7" width="14.5" height="14.2" rx="1.5" fill="#8ba6be"/><rect x="6.6" y="6.2" width="14.5" height="14.6" rx="2" fill="#aec1d4" stroke="#4f657b" stroke-width="1.3"/></svg>
<svg class="a" style="left:1464px;top:7.5px;" width="22" height="23" viewBox="0 0 22 23"><rect x="0.8" y="2.9" width="17.4" height="19.4" rx="2" fill="#9fb5c9" stroke="#4f657b" stroke-width="1.3"/><rect x="5.4" y="0.7" width="7.8" height="3.6" rx="1" fill="#b9c9d8" stroke="#4f657b" stroke-width="1"/><rect x="6.4" y="5.2" width="14.3" height="15.4" rx="2" fill="#aec1d4" stroke="#4f657b" stroke-width="1.3"/></svg>
<svg class="a" style="left:1500.6px;top:9.2px;" width="22" height="22" viewBox="0 0 22 22"><path d="M0.8 9.2L11.6 0.8V6.2C17.5 6.2 21.2 9.8 21.2 14.2C21.2 17.6 18.6 20.6 14.2 20.8L12.6 17.6C15.6 17.4 16.9 15.8 16.9 14.2C16.9 12.4 15 11.8 11.6 11.8V17.6Z" fill="#9cc6b6" stroke="#4f657b" stroke-width="1.3" stroke-linejoin="round"/></svg>
<svg class="a" style="left:1535px;top:9.2px;" width="22" height="22" viewBox="0 0 22 22"><g transform="translate(22.4 0) scale(-1 1)"><path d="M0.8 9.2L11.6 0.8V6.2C17.5 6.2 21.2 9.8 21.2 14.2C21.2 17.6 18.6 20.6 14.2 20.8L12.6 17.6C15.6 17.4 16.9 15.8 16.9 14.2C16.9 12.4 15 11.8 11.6 11.8V17.6Z" fill="#9cc6b6" stroke="#4f657b" stroke-width="1.3" stroke-linejoin="round"/></g></svg>
<svg class="a" style="left:1571px;top:8px;" width="22" height="22" viewBox="0 0 22 22"><circle cx="10.7" cy="10.6" r="9.6" fill="#fff" stroke="#1f8fe8" stroke-width="1.4"/><text x="10.7" y="16.6" text-anchor="middle" font-family="Liberation Sans, sans-serif" font-weight="bold" font-size="16.5" fill="#1a1a1a">?</text></svg>
</body></html>
